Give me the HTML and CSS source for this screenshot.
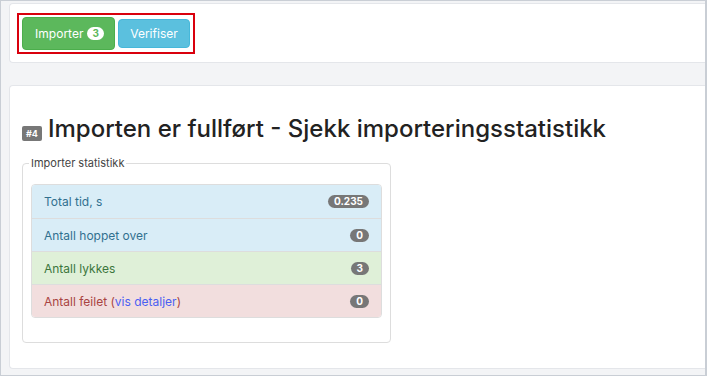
FILE: index.html
```html
<!DOCTYPE html>
<html lang="nb">

<head>
    <meta charset="UTF-8">
    <title>Importer</title>
    <link rel="stylesheet" href="styles.css">
</head>

<body>
    <div class="window">
        <!-- verktøylinje -->
        <div class="card toolbar">
            <div class="steps">
                <a class="btn btn-success" href="#">Importer <span class="badge">3</span></a>
                <a class="btn btn-info" href="#">Verifiser</a>
            </div>
        </div>

        <!-- resultat -->
        <div class="card result">
            <h2 class="title"><span class="label">#4</span> Importen er fullført - Sjekk importeringsstatistikk</h2>
            <fieldset class="stats">
                <legend>Importer statistikk</legend>
                <ul class="list-group">
                    <li class="item item-info">Total tid, s <span class="pill">0.235</span></li>
                    <li class="item item-info">Antall hoppet over <span class="pill">0</span></li>
                    <li class="item item-success">Antall lykkes <span class="pill">3</span></li>
                    <li class="item item-danger"><span>Antall feilet (<a href="#">vis detaljer</a>)</span> <span class="pill">0</span></li>
                </ul>
            </fieldset>
        </div>
    </div>
</body>

</html>
```

FILE: styles.css
```css
* {
    box-sizing: border-box;
}

html,
body {
    margin: 0;
    height: 100%;
}

body {
    font-family: Inter, "Noto Sans", sans-serif;
    color: #333;
}

.window {
    height: 376px;
    padding: 2px 0 0 8px;
    background: #f3f4f6;
    border: 1px solid #c9ced5;
    border-right-width: 2px;
    border-top-width: 1px;
    overflow: hidden;
}

.card {
    background: #fff;
    border: 1px solid #e4e6ea;
    border-right: none;
    border-radius: 4px 0 0 4px;
}

.toolbar {
    height: 60px;
    padding: 9px 7px;
}

.steps {
    display: inline-flex;
    align-items: center;
    gap: 3px;
    width: 178px;
    height: 41px;
    padding: 0 3px;
    border: 2px solid #d9000d;
}

.btn {
    display: inline-flex;
    align-items: center;
    justify-content: center;
    font-size: 12px;
    color: #fff;
    text-decoration: none;
    border-radius: 4px;
}

.btn-success {
    width: 93px;
    height: 33px;
    padding-left: 2px;
    background: #5cb85c;
    border: 1px solid #4cae4c;
}

.btn-info {
    width: 72px;
    height: 29px;
    background: #5bc0de;
    border: 1px solid #46b8da;
}

.badge {
    display: inline-block;
    margin-left: 4px;
    padding: 0 5px;
    font-size: 10px;
    font-weight: bold;
    line-height: 13px;
    color: #5cb85c;
    background: #fff;
    border-radius: 8px;
}

.result {
    height: 284px;
    margin-top: 22px;
    padding: 28px 12px 0;
}

.title {
    margin: 0 0 13px;
    font-size: 24px;
    font-weight: 500;
    color: #222;
    display: flex;
    align-items: baseline;
    gap: 6px;
}

.label {
    display: inline-block;
    padding: 3px 4px;
    font-size: 9px;
    font-weight: bold;
    line-height: 9px;
    color: #fff;
    background: #777;
    border-radius: 2px;
}

.stats {
    width: 369px;
    height: 187px;
    margin: 0;
    padding: 14px 8px 0;
    border: 1px solid #ddd;
    border-radius: 4px;
}

.stats legend {
    padding: 0 2px;
    margin-left: -2px;
    font-size: 11px;
    color: #444;
}

.list-group {
    margin: 0;
    padding: 0;
    list-style: none;
    border-radius: 4px;
    overflow: hidden;
    border: 1px solid #ddd;
}

.item {
    display: flex;
    justify-content: space-between;
    align-items: center;
    height: 33px;
    padding: 0 12px;
    font-size: 12px;
    border-top: 1px solid #ddd;
}

.item:first-child {
    border-top: none;
}

.item-info {
    color: #31708f;
    background: #d9edf7;
}

.item-success {
    color: #3c763d;
    background: #dff0d8;
}

.item-danger {
    color: #a94442;
    background: #f2dede;
}

.item-danger a {
    color: #4a60f2;
    text-decoration: none;
}

.pill {
    padding: 1px 6px;
    font-size: 10px;
    font-weight: bold;
    line-height: 11px;
    color: #fff;
    background: #777;
    border-radius: 7px;
}
```
